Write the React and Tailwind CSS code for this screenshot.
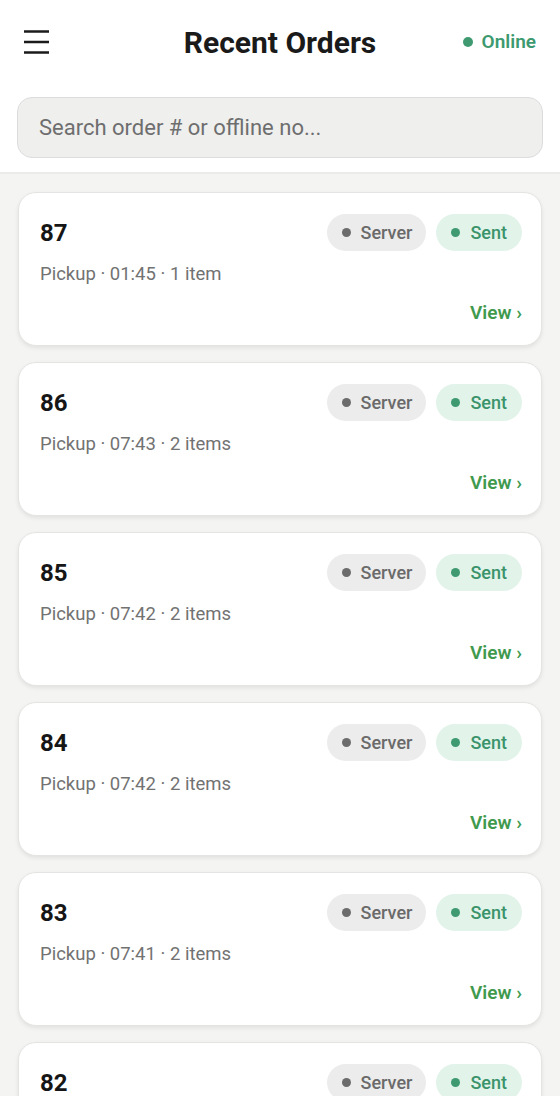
const orders = [
  { id: 87, time: '01:45', items: 1 },
  { id: 86, time: '07:43', items: 2 },
  { id: 85, time: '07:42', items: 2 },
  { id: 84, time: '07:42', items: 2 },
  { id: 83, time: '07:41', items: 2 },
  { id: 82, time: '07:40', items: 2 },
];

const Pill = ({ label, tone }) => (
  <span
    className={
      tone === 'green'
        ? 'flex items-center gap-[10px] h-[37px] rounded-full bg-[#e2f3ea] pl-[15px] pr-[15px] text-[18px] font-medium text-[#3a936a]'
        : 'flex items-center gap-[10px] h-[37px] rounded-full bg-[#ececec] pl-[15px] pr-[14px] text-[18px] font-medium text-[#6a6a6a]'
    }
  >
    <span
      className={
        tone === 'green'
          ? 'w-[9px] h-[9px] rounded-full bg-[#3f9a72]'
          : 'w-[9px] h-[9px] rounded-full bg-[#6c6c6c]'
      }
    ></span>
    {label}
  </span>
);

const OrderCard = ({ order }) => (
  <div className="bg-white rounded-[18px] border border-[#e4e4e2] shadow-[0_2px_4px_rgba(0,0,0,0.08)] pt-[21px] pb-[20px] pl-[21px] pr-[19px]">
    <div className="flex items-center justify-between h-[37px]">
      <span className="text-[24px] font-bold text-[#161616]">{order.id}</span>
      <div className="flex items-center gap-[10px]">
        <Pill label="Server" tone="gray" />
        <Pill label="Sent" tone="green" />
      </div>
    </div>
    <p className="mt-[11px] leading-6 text-[18.5px] text-[#727272]">
      Pickup · {order.time} · {order.items} {order.items === 1 ? 'item' : 'items'}
    </p>
    <div className="mt-[15px] leading-6 text-right text-[19px] font-semibold text-[#3f9a4e]">
      View ›
    </div>
  </div>
);

export default function App() {
  return (
    <div
      className="w-[560px] h-[1096px] overflow-hidden bg-[#f4f4f2]"
      style={{ fontFamily: 'Roboto, "Noto Sans", sans-serif' }}
    >
      <header className="bg-white border-b-2 border-[#ebebea] px-[17px] pb-[14px]">
        <div className="grid grid-cols-[1fr_auto_1fr] items-center h-[84px] mb-[13px] px-[7px]">
          <svg width="25" height="24" viewBox="0 0 25 24" className="text-[#1b1b1b]">
            <path d="M0 1.5h25M0 12h25M0 22.5h25" stroke="currentColor" strokeWidth="2.4" />
          </svg>
          <h1 className="text-[30px] font-bold text-[#1a1a1a]">Recent Orders</h1>
          <div className="flex items-center justify-end gap-[9px] text-[19px] font-semibold text-[#3d9a70]">
            <span className="w-[10px] h-[10px] rounded-full bg-[#3f9a72]"></span>
            Online
          </div>
        </div>
        <input
          type="text"
          placeholder="Search order # or offline no..."
          className="w-full h-[61px] rounded-[15px] bg-[#efefee] border border-[#dcdcdc] px-[21px] text-[22px] text-[#222] placeholder:text-[#6e6e6e] outline-none"
        />
      </header>
      <main className="flex flex-col gap-[16px] px-[18px] pt-[18px]">
        {orders.map((o) => (
          <OrderCard key={o.id} order={o} />
        ))}
      </main>
    </div>
  );
}
